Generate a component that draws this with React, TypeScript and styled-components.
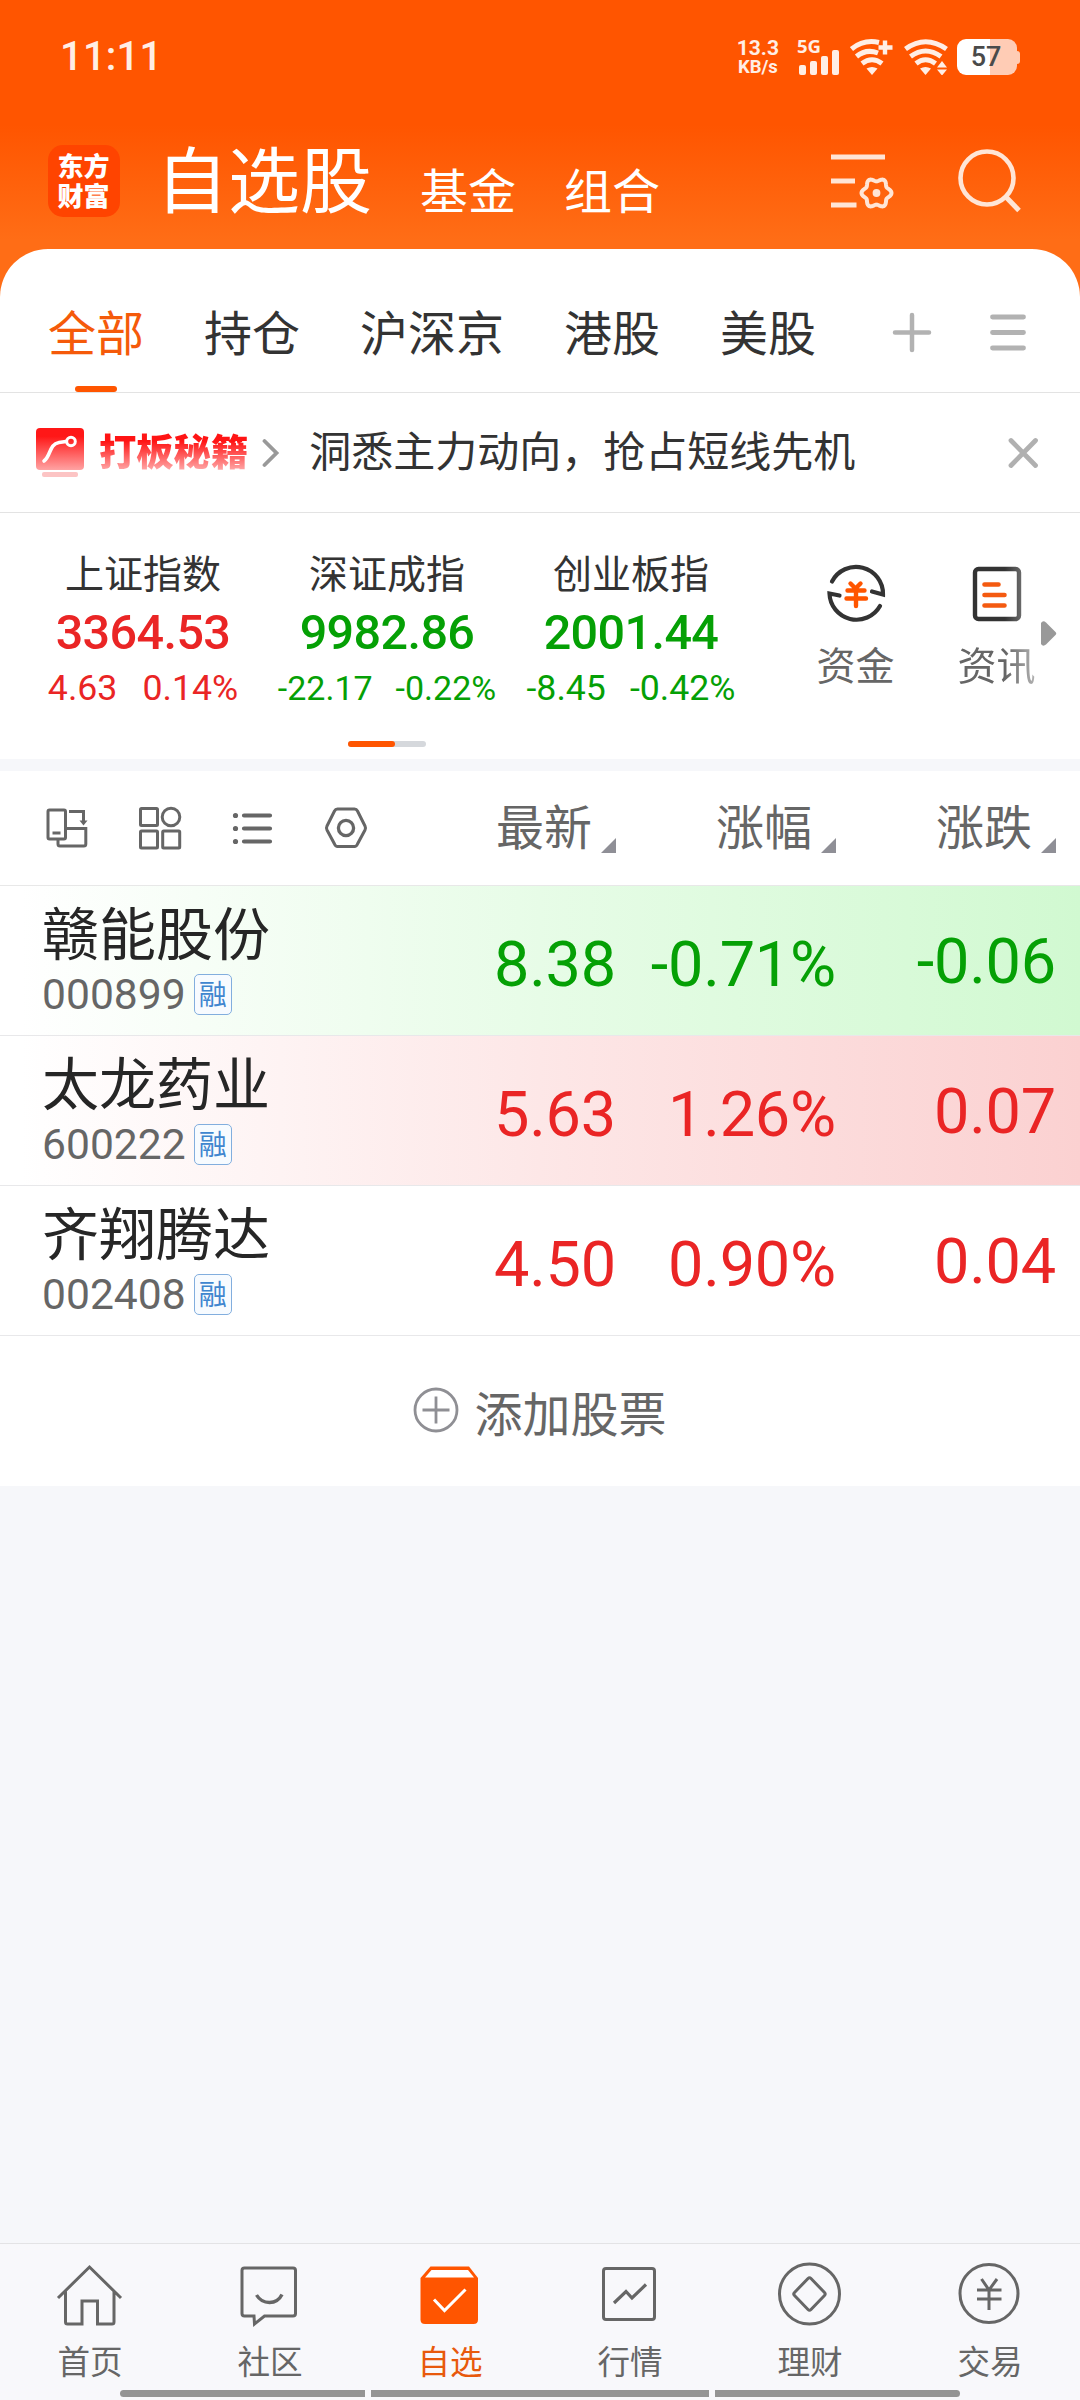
import React from "react";
import styled, { createGlobalStyle } from "styled-components";

const CJK = `"Noto Sans CJK SC", "Noto Sans", sans-serif`;
const NUM = `Roboto, "Noto Sans CJK SC", sans-serif`;

const RED = "#ea2525";
const GREEN = "#05a005";
const GREY = "#666666";
const ORANGE = "#ff5500";

const Global = createGlobalStyle`
  * { box-sizing: border-box; }
  html, body { margin: 0; padding: 0; background: #f6f7fa; }
  body { font-family: ${CJK}; color: #333; }
  svg { display: block; flex: none; }
`;

const Screen = styled.div`
  width: 1080px;
  height: 2400px;
  display: flex;
  flex-direction: column;
  overflow: hidden;
  background: #f6f7fa;
`;

const Top = styled.div`
  height: 310px;
  margin-bottom: -61px;
  flex: none;
  background: linear-gradient(180deg, #ff5500 0, #ff5500 125px, #ff6d16 240px, #ff6d16 100%);
`;

const StatusBar = styled.div`
  height: 112px;
  display: flex;
  align-items: center;
  justify-content: space-between;
  padding: 2px 60px 0 60px;
  color: #ffeee5;
  font-family: ${NUM};
`;

const Clock = styled.div`
  font-size: 40px;
  font-weight: 500;
  line-height: 48px;
  padding-bottom: 1px;
  letter-spacing: 0.2px;
`;

const StatusIcons = styled.div`
  display: flex;
  align-items: center;
`;

const Speed = styled.div`
  display: flex;
  flex-direction: column;
  align-items: center;
  font-weight: 700;
  margin-right: 18px;
`;

const SpeedLine = styled.span<{ $size: number; $h: number }>`
  font-size: ${(p) => p.$size}px;
  line-height: ${(p) => p.$h}px;
`;

const Signal = styled.div`
  display: flex;
  flex-direction: column;
  width: 42px;
  height: 36px;
  margin-right: 11px;
`;

const NetType = styled.span`
  font: 700 18.5px/13px "Noto Sans", sans-serif;
  height: 11px;
`;

const Bars = styled.div`
  display: flex;
  align-items: flex-end;
  gap: 4px;
  padding-left: 2px;
`;

const Bar = styled.i<{ $h: number }>`
  width: 7px;
  height: ${(p) => p.$h}px;
  border-radius: 2px;
  background: #ffeee5;
`;

const Battery = styled.div`
  display: flex;
  align-items: center;
  margin-left: 9px;
`;

const BatteryBody = styled.div`
  width: 60px;
  height: 36px;
  border-radius: 9px;
  background: linear-gradient(90deg, #fff 0, #fff 33px, #ffccb5 33px);
  color: #4a4a4a;
  font-size: 27px;
  font-weight: 500;
  line-height: 36px;
  text-align: center;
  padding-right: 2px;
`;

const BatteryTip = styled.i`
  width: 3px;
  height: 13px;
  border-radius: 0 3px 3px 0;
  background: #ffccb5;
`;

const TitleBar = styled.div`
  height: 137px;
  display: flex;
  align-items: center;
  padding: 0 59px 0 48px;
  color: #fff;
`;

const Logo = styled.div`
  width: 72px;
  height: 72px;
  border-radius: 15px;
  background: #ff4400;
  font-size: 26px;
  font-weight: 900;
  line-height: 30px;
  padding: 5px 1px 0 0;
  text-align: center;
`;

const MainTitle = styled.div`
  font-size: 72px;
  line-height: 84px;
  padding-bottom: 9px;
  margin-left: 36px;
`;

const SubTitle = styled.div`
  font-size: 48px;
  line-height: 56px;
  padding-top: 15px;
  margin-left: 48px;
`;

const TitleTools = styled.div`
  display: flex;
  align-items: center;
  gap: 64px;
  margin-left: auto;
`;

const Card = styled.div`
  flex: none;
  background: #fff;
  border-radius: 48px 48px 0 0;
`;

const Tabs = styled.div`
  height: 144px;
  display: flex;
  padding: 0 48px;
  gap: 60px;
  border-bottom: 1px solid #e3e3e3;
`;

const Tab = styled.div<{ $on?: boolean }>`
  display: flex;
  flex-direction: column;
  align-items: center;
  justify-content: space-between;
  padding-top: 53px;
  font-size: 48px;
  line-height: 56px;
  color: ${(p) => (p.$on ? "#f55a0a" : "#333")};
  &::after {
    content: "";
    width: 42px;
    height: 6px;
    border-radius: 3px;
    background: ${(p) => (p.$on ? ORANGE : "transparent")};
  }
`;

const TabTools = styled.div`
  display: flex;
  align-items: center;
  gap: 55px;
  margin-left: auto;
  height: 143px;
  padding: 22px 4px 0 0;
`;

const Banner = styled.div`
  height: 120px;
  display: flex;
  align-items: center;
  padding: 0 41px 0 35px;
  border-bottom: 1px solid #e3e3e3;
`;

const BannerName = styled.div`
  margin: 0 14px 5px 14px;
  font-size: 37.3px;
  font-weight: 900;
  line-height: 44px;
  background: linear-gradient(180deg, #ff1414 30%, #ffb0b0 100%);
  background-clip: text;
  -webkit-background-clip: text;
  color: transparent;
`;

const BannerText = styled.div`
  margin: 0 auto 7px 29px;
  font-size: 42px;
  line-height: 50px;
`;

const Indices = styled.div`
  height: 246px;
  display: flex;
  padding-left: 21px;
`;

const IndexArea = styled.div`
  width: 732px;
  display: flex;
  flex-direction: column;
  align-items: center;
`;

const IndexList = styled.div`
  display: flex;
`;

const Index = styled.div<{ $color: string }>`
  width: 244px;
  height: 228px;
  display: flex;
  flex-direction: column;
  align-items: center;
  padding-top: 35px;
  color: ${(p) => p.$color};
  font-family: ${NUM};
`;

const IndexName = styled.div`
  font-family: ${CJK};
  font-size: 39px;
  line-height: 46px;
  color: #333;
`;

const IndexValue = styled.div`
  font-size: 48.5px;
  font-weight: 500;
  line-height: 58px;
  margin-top: 10px;
  letter-spacing: -0.6px;
`;

const IndexChange = styled.div<{ $size: number; $gap: number }>`
  display: flex;
  gap: ${(p) => p.$gap}px;
  font-size: ${(p) => p.$size}px;
  line-height: 44px;
  margin-top: 4px;
`;

const Pager = styled.div`
  width: 78px;
  height: 6px;
  border-radius: 3px;
  background: #d5d8dc;
  &::before {
    content: "";
    display: block;
    width: 47px;
    height: 6px;
    border-radius: 3px;
    background: ${ORANGE};
  }
`;

const Shortcuts = styled.div`
  flex: 1;
  display: flex;
  padding-left: 32px;
`;

const Shortcut = styled.div<{ $fade?: boolean }>`
  flex: none;
  width: 141px;
  display: flex;
  flex-direction: column;
  align-items: center;
  padding-top: 50px;
  color: ${GREY};
  font-size: 39px;
  line-height: 46px;
  gap: 15px;
  ${(p) => p.$fade && "mask-image: linear-gradient(90deg, #000 56%, rgba(0,0,0,.4) 82%);"}
`;

const MoreArrow = styled.div`
  margin: 108px 0 0 -26px;
`;

const Gap = styled.div`
  height: 12px;
  flex: none;
`;

const Panel = styled.div`
  flex: none;
  background: #fff;
`;

const grid = `
  display: grid;
  grid-template-columns: 390px 226px 220px 220px;
`;

const TableHead = styled.div`
  ${grid}
  height: 115px;
  border-bottom: 1px solid #e8e8e8;
`;

const ViewTools = styled.div`
  display: flex;
  align-items: center;
  gap: 48px;
  padding-left: 44px;
`;

const HeadCell = styled.div`
  display: flex;
  justify-content: flex-end;
  gap: 9px;
  padding-top: 25px;
  font-size: 48px;
  line-height: 56px;
  color: ${GREY};
  &::after {
    content: "";
    width: 15px;
    height: 15px;
    margin-top: 42px;
    background: #8f8f96;
    clip-path: polygon(100% 0, 100% 100%, 0 100%);
  }
`;

const Row = styled.div<{ $tint?: string; $color: string }>`
  ${grid}
  height: 150px;
  border-bottom: 1px solid #e8e8ea;
  color: ${(p) => p.$color};
  background: ${(p) => p.$tint || "#fff"};
`;

const StockCell = styled.div`
  display: flex;
  flex-direction: column;
  padding: 11px 0 0 42px;
`;

const StockName = styled.div`
  font-size: 57px;
  line-height: 66px;
  color: #262626;
`;

const StockMeta = styled.div`
  display: flex;
  align-items: center;
  gap: 8px;
  height: 42px;
  margin-top: 10px;
`;

const Code = styled.span`
  font-family: ${NUM};
  font-size: 42.6px;
  line-height: 42px;
  padding-bottom: 1px;
  color: ${GREY};
`;

const Margin = styled.span`
  width: 38px;
  height: 41px;
  border: 1.5px solid #82aede;
  border-radius: 5px;
  background: #f7fbff;
  color: #3f86cf;
  font-size: 28px;
  line-height: 36px;
  text-align: center;
`;

const Quote = styled.div<{ $last?: boolean }>`
  font-family: ${NUM};
  font-size: 63px;
  letter-spacing: -0.2px;
  line-height: 76px;
  text-align: right;
  white-space: nowrap;
  padding-top: ${(p) => (p.$last ? 38 : 41)}px;
`;

const AddRow = styled.div`
  height: 150px;
  display: flex;
  justify-content: center;
  gap: 15px;
  color: ${GREY};
  font-size: 48px;
  line-height: 56px;
  padding: 47px 0 0 0;
`;

const AddIcon = styled.div`
  padding-top: 4px;
`;

const NavBar = styled.nav`
  margin-top: auto;
  flex: none;
  height: 157px;
  display: flex;
  flex-direction: column;
  border-top: 1px solid #e3e3e5;
  background: #f8f8fb;
`;

const NavItems = styled.div`
  display: flex;
  height: 146px;
`;

const NavItem = styled.div<{ $on?: boolean }>`
  width: 180px;
  display: flex;
  flex-direction: column;
  align-items: center;
  padding-top: 16px;
  gap: 11px;
  font-size: 32.6px;
  line-height: 38px;
  color: ${(p) => (p.$on ? "#e8590c" : GREY)};
`;

const NavIcon = styled.svg`
  margin-left: -2px;
`;

const HomeBars = styled.div`
  display: flex;
  justify-content: center;
  gap: 6px;
`;

const HomeBar = styled.i<{ $w: number; $r: string }>`
  width: ${(p) => p.$w}px;
  height: 7px;
  border-radius: ${(p) => p.$r};
  background: #949494;
`;

const PlusWifi = () => (
  <svg width="43" height="36" viewBox="0 0 43 36" fill="none" stroke="#ffeee5" strokeWidth="5">
    <path d="M1.500 10Q14 0 29 3.500" />
    <path d="M6.500 17.500Q16 9.500 28 14" />
    <path d="M12 24.500Q22 17 32 24.500" />
    <path d="M16.500 29.500Q22 26.500 27.500 29.500L22 36Z" fill="#ffeee5" stroke="none" />
    <path d="M35 1.500v14M28.500 8.500h14" strokeWidth="4.400" />
  </svg>
);

const DataWifi = () => (
  <svg width="44" height="36" viewBox="0 0 44 36" fill="none" stroke="#ffeee5" strokeWidth="5">
    <path d="M1.500 10Q21.500 -4.500 42.500 10" />
    <path d="M6.500 17.500Q21.500 6.500 37 17.500" />
    <path d="M12 24.500Q21.500 17 31.500 24.500" />
    <path d="M16 29.500Q21.500 26.500 27 29.500L21.500 36Z" fill="#ffeee5" stroke="none" />
    <path d="M38 22l5 6.500h-10zM38 36.500l5-6h-10z" fill="#ffeee5" stroke="none" />
  </svg>
);

const gearPath = `M${Array.from({ length: 72 }, (_, i) => {
  const t = (i * Math.PI) / 36;
  const r = 13.3 + 1.7 * Math.cos(6 * t);
  return `${(45.5 + r * Math.cos(t)).toFixed(2)} ${(43 + r * Math.sin(t)).toFixed(2)}`;
}).join("L")}Z`;

const MenuGear = () => (
  <svg width="63" height="62" viewBox="0 0 63 62" fill="none" stroke="#ffe5d6" strokeWidth="5">
    <path d="M0 7h54M0 31h24M0 55h25.500" />
    <path d={gearPath} strokeWidth="4" strokeLinejoin="round" />
    <circle cx="45.500" cy="43" r="3.900" fill="#ffe5d6" stroke="none" />
  </svg>
);

const Search = () => (
  <svg width="63" height="66" viewBox="0 0 63 66" fill="none" stroke="#ffe5d6" strokeWidth="4.600">
    <circle cx="29" cy="30" r="26.500" />
    <path d="M48 49l13 13.500" strokeWidth="5" />
  </svg>
);

const PlusMenu = () => (
  <>
    <svg width="42" height="42" viewBox="0 0 42 42" stroke="#b2b2b2" strokeWidth="4.500" strokeLinecap="round">
      <path d="M21 4v35M4 21.500h34" />
    </svg>
    <svg width="40" height="42" viewBox="0 0 40 42" stroke="#b2b2b2" strokeWidth="4.800" strokeLinecap="round">
      <path d="M4.500 6h31M4.500 21.500h31M4.500 37h31" />
    </svg>
  </>
);

const BannerIcon = () => (
  <svg width="50" height="50" viewBox="0 0 50 50" fill="none">
    <defs>
      <linearGradient id="redfade" x1="0" y1="0" x2="0" y2="1">
        <stop offset=".2" stopColor="#ff1717" />
        <stop offset="1" stopColor="#ffa3a3" />
      </linearGradient>
    </defs>
    <rect x="1" y="0" width="48" height="42" rx="4" fill="url(#redfade)" />
    <rect x="7" y="44" width="36" height="5" rx="2" fill="#fcc4c4" />
    <path d="M9 33C16 28 14 16 24 14.500L31 13.500" stroke="#fff" strokeWidth="3.600" strokeLinecap="round" />
    <circle cx="36" cy="13.500" r="4.300" stroke="#fff" strokeWidth="3" />
  </svg>
);

const Chevron = () => (
  <svg width="18" height="30" viewBox="0 0 18 30" fill="none" stroke="#999" strokeWidth="3.800" strokeLinecap="round">
    <path d="M2.500 3l12 12L2.500 27" />
  </svg>
);

const Close = () => (
  <svg width="32" height="32" viewBox="0 0 32 32" stroke="#b0b0b0" strokeWidth="4.800" strokeLinecap="round">
    <path d="M4 3.500l24.500 25M28.500 3.500L4 28.500" />
  </svg>
);

const FundIcon = () => (
  <svg width="60" height="62" viewBox="0 0 60 62" fill="none" stroke="#333" strokeWidth="4.200">
    <path d="M6 18.500A27 27 0 0 1 57 31.500L46 28.500" strokeLinecap="round" />
    <path d="M54 43A27 27 0 0 1 3.500 30.500L13.500 32.500" strokeLinecap="round" />
    <path d="M24.500 20.500l5 5 5-5M21.500 27.500h17M20.500 35.500h19.500M30 26v17" stroke={ORANGE} strokeWidth="4.400" strokeLinecap="round" />
  </svg>
);

const NewsIcon = () => (
  <svg width="60" height="62" viewBox="0 0 60 62" fill="none" stroke="#333" strokeWidth="4.400" strokeLinecap="round">
    <rect x="8" y="6" width="44" height="50" rx="3.500" />
    <path d="M17.500 21.500h14M17.500 32h20M17.500 42.500h20" stroke="#f45a10" strokeWidth="4.600" />
  </svg>
);

const ViewIcons = () => (
  <>
    <svg width="45" height="44" viewBox="0 0 45 44" fill="none" stroke={GREY} strokeWidth="3">
      <rect x="4" y="4" width="17.500" height="29" rx="1.500" />
      <path d="M8.500 27h8" />
      <path d="M25 5.500h14.500V17" />
      <path d="M35.500 14.500h8L39.500 19.500Z" fill={GREY} stroke="none" />
      <path d="M21.500 22.500h20.300v15.500a2 2 0 0 1-2 2H16a2 2 0 0 1-2-2V33.500" />
    </svg>
    <svg width="45" height="44" viewBox="0 0 45 44" fill="none" stroke={GREY} strokeWidth="3">
      <rect x="3.500" y="2.500" width="17" height="17" rx="1" />
      <circle cx="34" cy="11" r="8.800" />
      <rect x="3.500" y="25" width="17" height="17" rx="1" />
      <rect x="25.700" y="25" width="17" height="17" rx="1" />
    </svg>
    <svg width="45" height="44" viewBox="0 0 45 44" fill="none" stroke={GREY} strokeWidth="4.200" strokeLinecap="round">
      <path d="M14 9.500h26M14 22.500h26M14 35.500h26" />
      <path d="M5.500 9.500v.01M5.500 22.500v.01M5.500 35.500v.01" strokeWidth="5.200" />
    </svg>
    <svg width="45" height="44" viewBox="0 0 45 44" fill="none" stroke={GREY} strokeWidth="3">
      <path d="M14.500 3h17q2 0 3 2l7.500 15q1 2 0 4l-7.500 14q-1 2.500-3 2.500h-17q-2 0-3-2.500l-7.500-14q-1-2 0-4l7.500-15q1-2 3-2z" />
      <circle cx="23" cy="22" r="7.600" strokeWidth="3.300" />
    </svg>
  </>
);

const navIcons: Record<string, React.ReactNode> = {
  home: <path d="M4 38L35.500 7L67 38M11.500 31.500V62q0 2 2 2H28V41H43.500V64h14.500q2 0 2-2V31.500" />,
  chat: (
    <>
      <path d="M10.500 8H59q2.500 0 2.500 2.500V53.500q0 2.500-2.500 2.500H30.500L20.500 64L20 56H10.500q-2.500 0-2.500-2.500V10.500q0-2.500 2.500-2.500Z" />
      <path d="M22.500 35Q27 42.500 35.500 42.500T48 34.500" strokeWidth="3.400" />
    </>
  ),
  pick: (
    <>
      <path d="M6.500 18L16.500 6.500H55L64 18V59.500q0 4.500-4.500 4.500H11q-4.500 0-4.500-4.500Z" fill={ORANGE} stroke="none" />
      <path d="M17.500 10H54L60 17.500H11Z" fill="#fff" stroke="none" />
      <path d="M20 39.500L30.500 50.500L51.500 29.500" stroke="#fff" />
    </>
  ),
  market: (
    <>
      <rect x="9.500" y="8.500" width="51" height="51" rx="2.500" />
      <path d="M20 43L32 31.500L38 38L52 24.500" strokeWidth="3.200" />
    </>
  ),
  wealth: (
    <>
      <circle cx="35.500" cy="34" r="30" />
      <path d="M34 18.500q1.500-1.500 3 0L50.500 32.500q1.500 1.500 0 3L37 49.500q-1.500 1.500-3 0L20.500 35.500q-1.500-1.500 0-3Z" />
    </>
  ),
  trade: (
    <>
      <circle cx="35" cy="33.500" r="29" />
      <path d="M27.500 19L35 30L43 19M23 30H47.500M23 39H47.500M35 30V50" />
    </>
  ),
};

const nav = [
  ["home", "首页"],
  ["chat", "社区"],
  ["pick", "自选"],
  ["market", "行情"],
  ["wealth", "理财"],
  ["trade", "交易"],
];

const indices = [
  { name: "上证指数", value: "3364.53", diff: "4.63", pct: "0.14%", color: RED, size: 35.7, gap: 25 },
  { name: "深证成指", value: "9982.86", diff: "-22.17", pct: "-0.22%", color: GREEN, size: 34, gap: 23 },
  { name: "创业板指", value: "2001.44", diff: "-8.45", pct: "-0.42%", color: GREEN, size: 35.7, gap: 24 },
];

const stocks = [
  { name: "赣能股份", code: "000899", last: "8.38", pct: "-0.71%", diff: "-0.06", color: GREEN, tint: "linear-gradient(90deg, #fff 2%, #e7fce7 50%, #d1f9d1 100%)" },
  { name: "太龙药业", code: "600222", last: "5.63", pct: "1.26%", diff: "0.07", color: RED, tint: "linear-gradient(90deg, #fff 2%, #fde7e7 50%, #fbd1d1 100%)" },
  { name: "齐翔腾达", code: "002408", last: "4.50", pct: "0.90%", diff: "0.04", color: RED },
];

export default function App() {
  return (
    <Screen>
      <Global />
      <Top>
        <StatusBar>
          <Clock>11:11</Clock>
          <StatusIcons>
            <Speed>
              <SpeedLine $size={21} $h={20}>13.3</SpeedLine>
              <SpeedLine $size={18.5} $h={19}>KB/s</SpeedLine>
            </Speed>
            <Signal>
              <NetType>5G</NetType>
              <Bars>
                {[10, 14, 19, 25].map((h) => (
                  <Bar key={h} $h={h} />
                ))}
              </Bars>
            </Signal>
            <PlusWifi />
            <svg width="11" height="36" />
            <DataWifi />
            <Battery>
              <BatteryBody>57</BatteryBody>
              <BatteryTip />
            </Battery>
          </StatusIcons>
        </StatusBar>
        <TitleBar>
          <Logo>
            东方
            <br />
            财富
          </Logo>
          <MainTitle>自选股</MainTitle>
          <SubTitle>基金</SubTitle>
          <SubTitle>组合</SubTitle>
          <TitleTools>
            <MenuGear />
            <Search />
          </TitleTools>
        </TitleBar>
      </Top>

      <Card>
        <Tabs>
          <Tab $on>全部</Tab>
          <Tab>持仓</Tab>
          <Tab>沪深京</Tab>
          <Tab>港股</Tab>
          <Tab>美股</Tab>
          <TabTools>
            <PlusMenu />
          </TabTools>
        </Tabs>
        <Banner>
          <BannerIcon />
          <BannerName>打板秘籍</BannerName>
          <Chevron />
          <BannerText>洞悉主力动向，抢占短线先机</BannerText>
          <Close />
        </Banner>
        <Indices>
          <IndexArea>
            <IndexList>
              {indices.map((i) => (
                <Index key={i.name} $color={i.color}>
                  <IndexName>{i.name}</IndexName>
                  <IndexValue>{i.value}</IndexValue>
                  <IndexChange $size={i.size} $gap={i.gap}>
                    <span>{i.diff}</span>
                    <span>{i.pct}</span>
                  </IndexChange>
                </Index>
              ))}
            </IndexList>
            <Pager />
          </IndexArea>
          <Shortcuts>
            <Shortcut>
              <FundIcon />
              资金
            </Shortcut>
            <Shortcut $fade>
              <NewsIcon />
              资讯
            </Shortcut>
            <MoreArrow>
              <svg width="16" height="25" viewBox="0 0 16 25" fill="#999">
                <path d="M0 2Q2-1 5 1.500L14.500 11Q16 12.500 14.500 14L5 23.500Q2 26 0 23Z" />
              </svg>
            </MoreArrow>
          </Shortcuts>
        </Indices>
      </Card>
      <Gap />
      <Panel>
        <TableHead>
          <ViewTools>
            <ViewIcons />
          </ViewTools>
          <HeadCell>最新</HeadCell>
          <HeadCell>涨幅</HeadCell>
          <HeadCell>涨跌</HeadCell>
        </TableHead>
        {stocks.map((s) => (
          <Row key={s.code} $color={s.color} $tint={s.tint}>
            <StockCell>
              <StockName>{s.name}</StockName>
              <StockMeta>
                <Code>{s.code}</Code>
                <Margin>融</Margin>
              </StockMeta>
            </StockCell>
            <Quote>{s.last}</Quote>
            <Quote>{s.pct}</Quote>
            <Quote $last>{s.diff}</Quote>
          </Row>
        ))}
        <AddRow>
          <AddIcon>
            <svg width="46" height="46" viewBox="0 0 46 46" fill="none" stroke="#8f8f94" strokeWidth="2.800">
              <circle cx="23" cy="23" r="21" />
              <path d="M23 9.500v27M9.500 23h27" />
            </svg>
          </AddIcon>
          添加股票
        </AddRow>
      </Panel>
      <NavBar>
        <NavItems>
          {nav.map(([id, label]) => (
            <NavItem key={id} $on={id === "pick"}>
              <NavIcon width="70" height="70" viewBox="0 0 70 70" fill="none" stroke={GREY} strokeWidth="3">
                {navIcons[id]}
              </NavIcon>
              {label}
            </NavItem>
          ))}
        </NavItems>
        <HomeBars>
          <HomeBar $w={245} $r="4px 0 0 4px" />
          <HomeBar $w={338} $r="0" />
          <HomeBar $w={245} $r="0 4px 4px 0" />
        </HomeBars>
      </NavBar>
    </Screen>
  );
}
